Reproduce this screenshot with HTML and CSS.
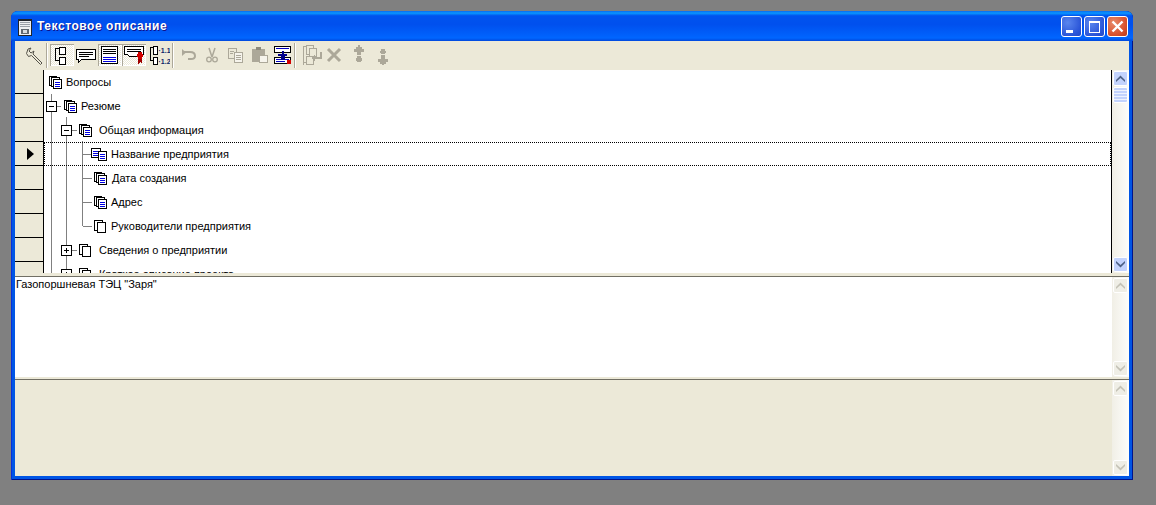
FILE: index.html
```html
<html lang="en">
<head>
  <meta charset="UTF-8">
  <title>Текстовое описание</title>
  <link rel="stylesheet" href="styles.css">
</head>
<body>
  <svg class="defs" width="0" height="0">
    <symbol id="doc" viewBox="0 0 13 13">
      <path d="M.5.5h7v9h-7z" fill="#fff" stroke="#000"/>
      <path d="M2.5 1.5h8v9h-8z" fill="#fff" stroke="#000"/>
      <path d="M4.5 3.5h8v9h-8z" fill="#fff" stroke="#000"/>
      <path d="M6 6.5h5M6 8.5h5M6 10.5h5" stroke="#0000e0"/>
    </symbol>
    <symbol id="doc-empty" viewBox="0 0 13 13">
      <path d="M.5.5h8v10h-8z" fill="#fff" stroke="#000"/>
      <path d="M3.5 2.5h8v10h-8z" fill="#fff" stroke="#000"/>
    </symbol>
    <symbol id="doc-wide" viewBox="0 0 16 13">
      <path d="M.5.5h9v9h-9z" fill="#fff" stroke="#000"/>
      <path d="M2 3.5h6M2 5.5h6M2 7.5h6" stroke="#0000e0"/>
      <path d="M7.5 3.5h8v9h-8z" fill="#fff" stroke="#000"/>
      <path d="M9 6.5h5M9 8.5h5M9 10.5h5" stroke="#0000e0"/>
    </symbol>
    <symbol id="minus" viewBox="0 0 11 11">
      <path d="M.5.5h10v10H.5z" fill="#fff" stroke="#000"/>
      <path d="M3 5.5h5" stroke="#000"/>
    </symbol>
    <symbol id="plus" viewBox="0 0 11 11">
      <path d="M.5.5h10v10H.5z" fill="#fff" stroke="#000"/>
      <path d="M3 5.5h5M5.5 3v5" stroke="#000"/>
    </symbol>
    <symbol id="chev-up" viewBox="0 0 9 7">
      <path d="M0 5l4.500-4.500L9 5v2L4.500 3 0 7z" fill="currentColor"/>
    </symbol>
    <symbol id="chev-down" viewBox="0 0 9 7">
      <path d="M0 2l4.500 4.500L9 2V0L4.500 4 0 0z" fill="currentColor"/>
    </symbol>
  </svg>

  <div class="window">
    <div class="titlebar">
      <svg class="title-icon" width="14" height="17" viewBox="0 0 14 17" shape-rendering="crispEdges">
        <path d="M0 0h14v17H0z" fill="#20242c"/>
        <path d="M1 2h12v14H1z" fill="#eef0f2"/>
        <path d="M2 3h10v1H2zM2 5h10v1H2zM2 7h10v1H2z" fill="#9aa0a8"/>
        <path d="M3 10h8v5H3z" fill="#606870"/>
        <path d="M5 11h4v3H5z" fill="#d8dce0"/>
      </svg>
      <span class="title-text">Текстовое описание</span>
      <div class="title-buttons">
        <div class="win-btn">
          <svg width="21" height="21" viewBox="0 0 21 21" shape-rendering="crispEdges"><path d="M5 14h7v3H5z" fill="#fff"/></svg>
        </div>
        <div class="win-btn">
          <svg width="21" height="21" viewBox="0 0 21 21" shape-rendering="crispEdges"><path d="M5.500 6.500h10v10h-10z" fill="none" stroke="#fff"/><path d="M5 5h11v2H5z" fill="#fff"/></svg>
        </div>
        <div class="win-btn win-close">
          <svg width="21" height="21" viewBox="0 0 21 21"><path d="M5.500 5.500l10 10M15.500 5.500l-10 10" stroke="#fff" stroke-width="2.400"/></svg>
        </div>
      </div>
    </div>

    <div class="client">
      <div class="toolbar">
        <div class="tool">
          <svg width="24" height="22" viewBox="0 0 24 22"><path d="M6 5l3-1-2 3 2 2 3-2-1 3 9 9-1.500 1.500-9-9-3 1-2-3z" fill="#ece9d8" stroke="#55534a"/></svg>
        </div>
        <div class="sep"></div>
        <div class="tool pressed">
          <svg width="24" height="22" viewBox="0 0 24 22" shape-rendering="crispEdges"><path d="M9.500 3.500h6v7h-6zM9.500 13.500h6v7h-6z" fill="#fff" stroke="#000"/><path d="M9 4.500H5.500v12H9" fill="none" stroke="#000"/></svg>
        </div>
        <div class="tool">
          <svg width="24" height="22" viewBox="0 0 24 22" shape-rendering="crispEdges"><path d="M2.500 5.500h19v10h-14l-3 3v-3h-2z" fill="#fff" stroke="#000"/><path d="M5 8.500h14M5 10.500h14M5 12.500h10" stroke="#000"/></svg>
        </div>
        <div class="tool pressed">
          <svg width="24" height="22" viewBox="0 0 24 22" shape-rendering="crispEdges"><path d="M3.500 2.500h16v17h-16z" fill="#fff" stroke="#000"/><path d="M5 5.500h13M5 7.500h13M5 9.500h13" stroke="#000"/><path d="M5 13.500h13M5 15.500h13M5 17.500h13" stroke="#0000e0"/></svg>
        </div>
        <div class="tool pressed">
          <svg width="24" height="22" viewBox="0 0 24 22" shape-rendering="crispEdges"><path d="M2.500 2.500h19v8h-4v2h-10l-2-2h-3z" fill="#fff" stroke="#000"/><path d="M5 5.500h14M5 7.500h14" stroke="#000"/><path d="M16 8h4v2h1v3h-1v2h-4v-2h-1v-3h1z" fill="#d00000"/><path d="M16 15h4v5l-2-2-2 2z" fill="#a00000"/></svg>
        </div>
        <div class="tool">
          <svg width="24" height="22" viewBox="0 0 24 22"><path d="M7.500 2.500h4v8h-4zM7.500 13.500h4v7h-4z" fill="#fff" stroke="#000" shape-rendering="crispEdges"/><path d="M7 3.500H4.500v13H7" fill="none" stroke="#000" shape-rendering="crispEdges"/><text x="12.500" y="9" class="tool-num">·1.1</text><text x="12.500" y="20" class="tool-num">·1.2</text></svg>
        </div>
        <div class="sep sep-first"></div>
        <div class="tool">
          <svg width="24" height="22" viewBox="0 0 24 22"><path d="M8 8h8c3 0 5 1.500 5 4s-2 3-4 3h-3" fill="none" stroke="#aca899" stroke-width="2"/><path d="M8 5v7l4-3.500z" fill="#aca899"/></svg>
        </div>
        <div class="tool">
          <svg width="24" height="22" viewBox="0 0 24 22"><path d="M11 4l3 9M17 4l-3 9" stroke="#aca899" stroke-width="1.500"/><circle cx="11" cy="15.500" r="2.300" fill="none" stroke="#aca899" stroke-width="1.300"/><circle cx="17" cy="15.500" r="2.300" fill="none" stroke="#aca899" stroke-width="1.300"/></svg>
        </div>
        <div class="tool">
          <svg width="24" height="22" viewBox="0 0 24 22" shape-rendering="crispEdges"><path d="M6.500 4.500h8v10h-8z" fill="#ece9d8" stroke="#aca899"/><path d="M12.500 8.500h8v10h-8z" fill="#f6f4ec" stroke="#aca899"/><path d="M14 11.500h5M14 13.500h5M14 15.500h5M8 7.500h4M8 9.500h3" stroke="#aca899"/></svg>
        </div>
        <div class="tool">
          <svg width="24" height="22" viewBox="0 0 24 22" shape-rendering="crispEdges"><path d="M6 5h13v13H6z" fill="#aca899"/><path d="M10 3h5v3h-5z" fill="#8d8a7c"/><path d="M13.500 11.500h8v7h-8z" fill="#f6f4ec" stroke="#aca899"/></svg>
        </div>
        <div class="tool">
          <svg width="24" height="22" viewBox="0 0 24 22" shape-rendering="crispEdges"><path d="M4.500 2.500h16v6h-16zM4.500 13.500h16v6h-16z" fill="#fff" stroke="#000"/><path d="M6 4.500h13M6 15.500h13M6 17.500h9" stroke="#0000c0"/><path d="M12 7h2v3h3v2h-2v4h-4v-4H8v-2h4z" fill="#00008a"/><path d="M17 16h4v4h-4z" fill="#d00000"/></svg>
        </div>
        <div class="sep sep-second"></div>
        <div class="tool">
          <svg width="24" height="22" viewBox="0 0 24 22" shape-rendering="crispEdges"><path d="M4.500 1.500v19M4.500 2.500h3M4.500 18.500h3" fill="none" stroke="#aca899"/><path d="M7.500 1.500h7v9h-7zM7.500 12.500h7v8h-7z" fill="none" stroke="#aca899"/><path d="M10.500 4.500h7v8h-7z" fill="#ece9d8" stroke="#aca899"/><path d="M16 13h5V8h2v7h-7v3l-3-4 3-4z" fill="#aca899"/></svg>
        </div>
        <div class="tool">
          <svg width="24" height="22" viewBox="0 0 24 22"><path d="M5 5l12 12M17 5L5 17" stroke="#aca899" stroke-width="3"/></svg>
        </div>
        <div class="tool">
          <svg width="24" height="22" viewBox="0 0 24 22" shape-rendering="crispEdges"><path d="M11 1h2v2h2v2h2v3h-3v3h-4V8H7V5h2V3h2z" fill="#aca899"/><path d="M10 12h4v2h1v3h-1v1h-4v-1H9v-3h1z" fill="#aca899"/></svg>
        </div>
        <div class="tool">
          <svg width="24" height="22" viewBox="0 0 24 22" shape-rendering="crispEdges"><path d="M10 5h4v2h1v2h-1v1h-4V9H9V7h1z" fill="#aca899"/><path d="M10 11h4v4h3v3h-2v2h-2v1h-2v-1H9v-2H7v-3h3z" fill="#aca899"/></svg>
        </div>
      </div>

      <div class="tree-panel">
        <div class="indicator">
          <div class="ind-row"></div>
          <div class="ind-row"></div>
          <div class="ind-row"></div>
          <div class="ind-row"><span class="ind-arrow"></span></div>
          <div class="ind-row"></div>
          <div class="ind-row"></div>
          <div class="ind-row"></div>
          <div class="ind-row"></div>
          <div class="ind-row"></div>
        </div>
        <div class="tree">
          <!-- connector lines go behind the rows -->
          <svg class="tree-lines" width="60" height="203" shape-rendering="crispEdges">
            <path d="M7.500 24v179M22.500 47v156M38.500 71v85M38.500 84.500h9M38.500 108.500h9M38.500 132.500h9M38.500 156.500h9M12 36.500h5M28 60.500h5M28 180.500h5M28 204.500h5" stroke="#808080" fill="none"/>
          </svg>
          <div class="row l0"><svg class="ico"><use href="#doc"/></svg><span class="label">Вопросы</span></div>
          <div class="row l1"><svg class="exp"><use href="#minus"/></svg><svg class="ico after-exp"><use href="#doc"/></svg><span class="label">Резюме</span></div>
          <div class="row l2"><svg class="exp"><use href="#minus"/></svg><svg class="ico after-exp"><use href="#doc"/></svg><span class="label wide">Общая информация</span></div>
          <div class="row l3 selected"><svg class="ico ico-wide"><use href="#doc-wide"/></svg><span class="label">Название предприятия</span></div>
          <div class="row l4"><svg class="ico"><use href="#doc"/></svg><span class="label shift">Дата создания</span></div>
          <div class="row l4"><svg class="ico"><use href="#doc"/></svg><span class="label">Адрес</span></div>
          <div class="row l4"><svg class="ico"><use href="#doc-empty"/></svg><span class="label">Руководители предприятия</span></div>
          <div class="row l2"><svg class="exp"><use href="#plus"/></svg><svg class="ico after-exp"><use href="#doc-empty"/></svg><span class="label wide">Сведения о предприятии</span></div>
          <div class="row l2"><svg class="exp"><use href="#plus"/></svg><svg class="ico after-exp"><use href="#doc-empty"/></svg><span class="label wide">Краткое описание проекта</span></div>
        </div>
        <div class="scrollbar">
          <div class="sb-btn active"><svg width="9" height="7"><use href="#chev-up"/></svg></div>
          <div class="sb-thumb"></div>
          <div class="sb-track"></div>
          <div class="sb-btn active"><svg width="9" height="7"><use href="#chev-down"/></svg></div>
        </div>
      </div>
      <div class="splitter"></div>

      <div class="memo">
        <div class="memo-text">Газопоршневая ТЭЦ "Заря"</div>
        <div class="scrollbar">
          <div class="sb-btn"><svg width="9" height="7"><use href="#chev-up"/></svg></div>
          <div class="sb-track"></div>
          <div class="sb-btn"><svg width="9" height="7"><use href="#chev-down"/></svg></div>
        </div>
      </div>
      <div class="splitter splitter-thin"></div>

      <div class="notes">
        <div class="notes-area"></div>
        <div class="scrollbar">
          <div class="sb-btn"><svg width="9" height="7"><use href="#chev-up"/></svg></div>
          <div class="sb-track"></div>
          <div class="sb-btn"><svg width="9" height="7"><use href="#chev-down"/></svg></div>
        </div>
      </div>
    </div>
  </div>
</body>
</html>
```

FILE: styles.css
```css
html, body {
  margin: 0;
  height: 100%;
  overflow: hidden;
}

body {
  background-color: #808080;
  font-family: "Liberation Sans", Arial, sans-serif;
  font-size: 11px;
  color: #000;
}

.defs {
  position: absolute;
}

.window {
  width: 1122px;
  height: 469px;
  margin: 11px 0 0 11px;
  display: flex;
  flex-direction: column;
  background-color: #0055e5;
  border-radius: 7px 7px 0 0;
  box-shadow: inset 1px 0 #0831d9, inset -1px 0 #00138c, inset 0 -1px #00138c;
}

.titlebar {
  height: 30px;
  display: flex;
  align-items: center;
  padding: 0 5px 0 7px;
  border-radius: 7px 7px 0 0;
  background: linear-gradient(to bottom, #0a6af0 0, #0997ff 7%, #0053ee 16%, #0050ee 45%, #0060fb 80%, #0066ff 90%, #0048dd 100%);
}

.title-icon {
  margin-top: 3px;
}

.title-text {
  margin-left: 5px;
  color: #fff;
  font-size: 12px;
  font-weight: bold;
  letter-spacing: .55px;
  text-shadow: 1px 1px #0f1089;
}

.title-buttons {
  margin-left: auto;
  display: flex;
  gap: 2px;
}

.win-btn {
  width: 21px;
  height: 21px;
  box-sizing: border-box;
  border: 1px solid #fff;
  border-radius: 3px;
  background: radial-gradient(circle at 30% 30%, #5a86ee, #2a55d8 70%, #2048c8);
  overflow: hidden;
}

.win-btn svg {
  display: block;
  margin: -1px;
}

.win-close {
  background: radial-gradient(circle at 30% 30%, #e88a6a, #d8502c 65%, #b93a1a);
}

.client {
  flex: 1;
  margin: 0 4px 4px 4px;
  display: flex;
  flex-direction: column;
  background-color: #ece9d8;
  min-height: 0;
}

.toolbar {
  height: 29px;
  box-sizing: border-box;
  padding: 3px 0 0 7px;
  display: flex;
  align-items: flex-start;
}

.tool {
  width: 24px;
  height: 22px;
}

.tool svg {
  display: block;
}

.tool-num {
  font-size: 7px;
  font-weight: bold;
  fill: #0a246a;
}

.pressed {
  background: repeating-conic-gradient(#fff 0 25%, #ece9d8 0 50%) 0 0 / 2px 2px;
  box-shadow: inset 1px 1px #aca899, inset -1px -1px #fff;
}

.sep {
  width: 2px;
  height: 25px;
  margin: -1px 2px 0 0;
  background: linear-gradient(to right, #aca899 50%, #fff 50%);
}

.sep-first {
  margin: -1px 0 0 2px;
}

.sep-second {
  margin: -1px 3px 0 0;
}

.tree-panel {
  height: 203px;
  display: flex;
  background-color: #fff;
  overflow: hidden;
}

.indicator {
  width: 28px;
  flex-shrink: 0;
  background-color: #ece9d8;
  border-right: 1px solid #000;
  box-sizing: content-box;
}

.ind-row {
  height: 24px;
  box-sizing: border-box;
  border-bottom: 1px solid #000;
  display: flex;
  align-items: center;
  padding-left: 12px;
}

.ind-arrow {
  width: 0;
  height: 0;
  border-left: 7px solid #000;
  border-top: 6px solid transparent;
  border-bottom: 6px solid transparent;
}

.tree {
  flex: 1;
  position: relative;
  border-right: 1px solid #000;
  min-width: 0;
}

.tree-lines {
  position: absolute;
  left: 0;
  top: 0;
}

.row {
  position: relative;
  height: 24px;
  box-sizing: border-box;
  display: flex;
  align-items: center;
  white-space: nowrap;
}

.selected {
  border: 1px dotted #000;
  margin-left: 0;
}

.l0 { padding-left: 5px; }
.l1 { padding-left: 2px; }
.l2 { padding-left: 17px; }
.l3 { padding-left: 46px; }
.l4 { padding-left: 50px; }

.ico {
  width: 13px;
  height: 13px;
  flex-shrink: 0;
  shape-rendering: crispEdges;
}

.ico-wide {
  width: 16px;
}

.exp {
  width: 11px;
  height: 11px;
  flex-shrink: 0;
  shape-rendering: crispEdges;
}

.after-exp {
  margin-left: 7px;
}

.label {
  margin-left: 4px;
}

.wide {
  margin-left: 7px;
}

.shift {
  margin-left: 5px;
}

.scrollbar {
  width: 17px;
  flex-shrink: 0;
  display: flex;
  flex-direction: column;
  box-sizing: border-box;
  padding: 1px 1px 1px 1px;
  background: linear-gradient(to right, #f1efe6, #fdfdfb);
}

.sb-btn {
  height: 15px;
  flex-shrink: 0;
  display: flex;
  align-items: center;
  justify-content: center;
  box-sizing: border-box;
  border: 1px solid #fff;
  border-radius: 2px;
  background-color: #efeee6;
  color: #c4c2b6;
}

.sb-btn.active {
  background: #c3d3fd;
  color: #4d6185;
}

.sb-thumb {
  height: 16px;
  margin-top: 1px;
  box-sizing: border-box;
  border: 1px solid #fff;
  border-radius: 2px;
  background: repeating-linear-gradient(to bottom, #c3d3fd 0 2px, #eef3fe 2px 3px);
}

.sb-track {
  flex: 1;
}

.splitter {
  height: 4px;
  box-sizing: border-box;
  background-color: #ece9d8;
  border-bottom: 1px solid #716f64;
}

.splitter-thin {
  height: 3px;
}

.memo {
  height: 100px;
  display: flex;
  background-color: #fff;
}

.memo-text {
  flex: 1;
  padding: 1px 1px;
}

.notes {
  flex: 1;
  display: flex;
  min-height: 0;
}

.notes-area {
  flex: 1;
}
```
